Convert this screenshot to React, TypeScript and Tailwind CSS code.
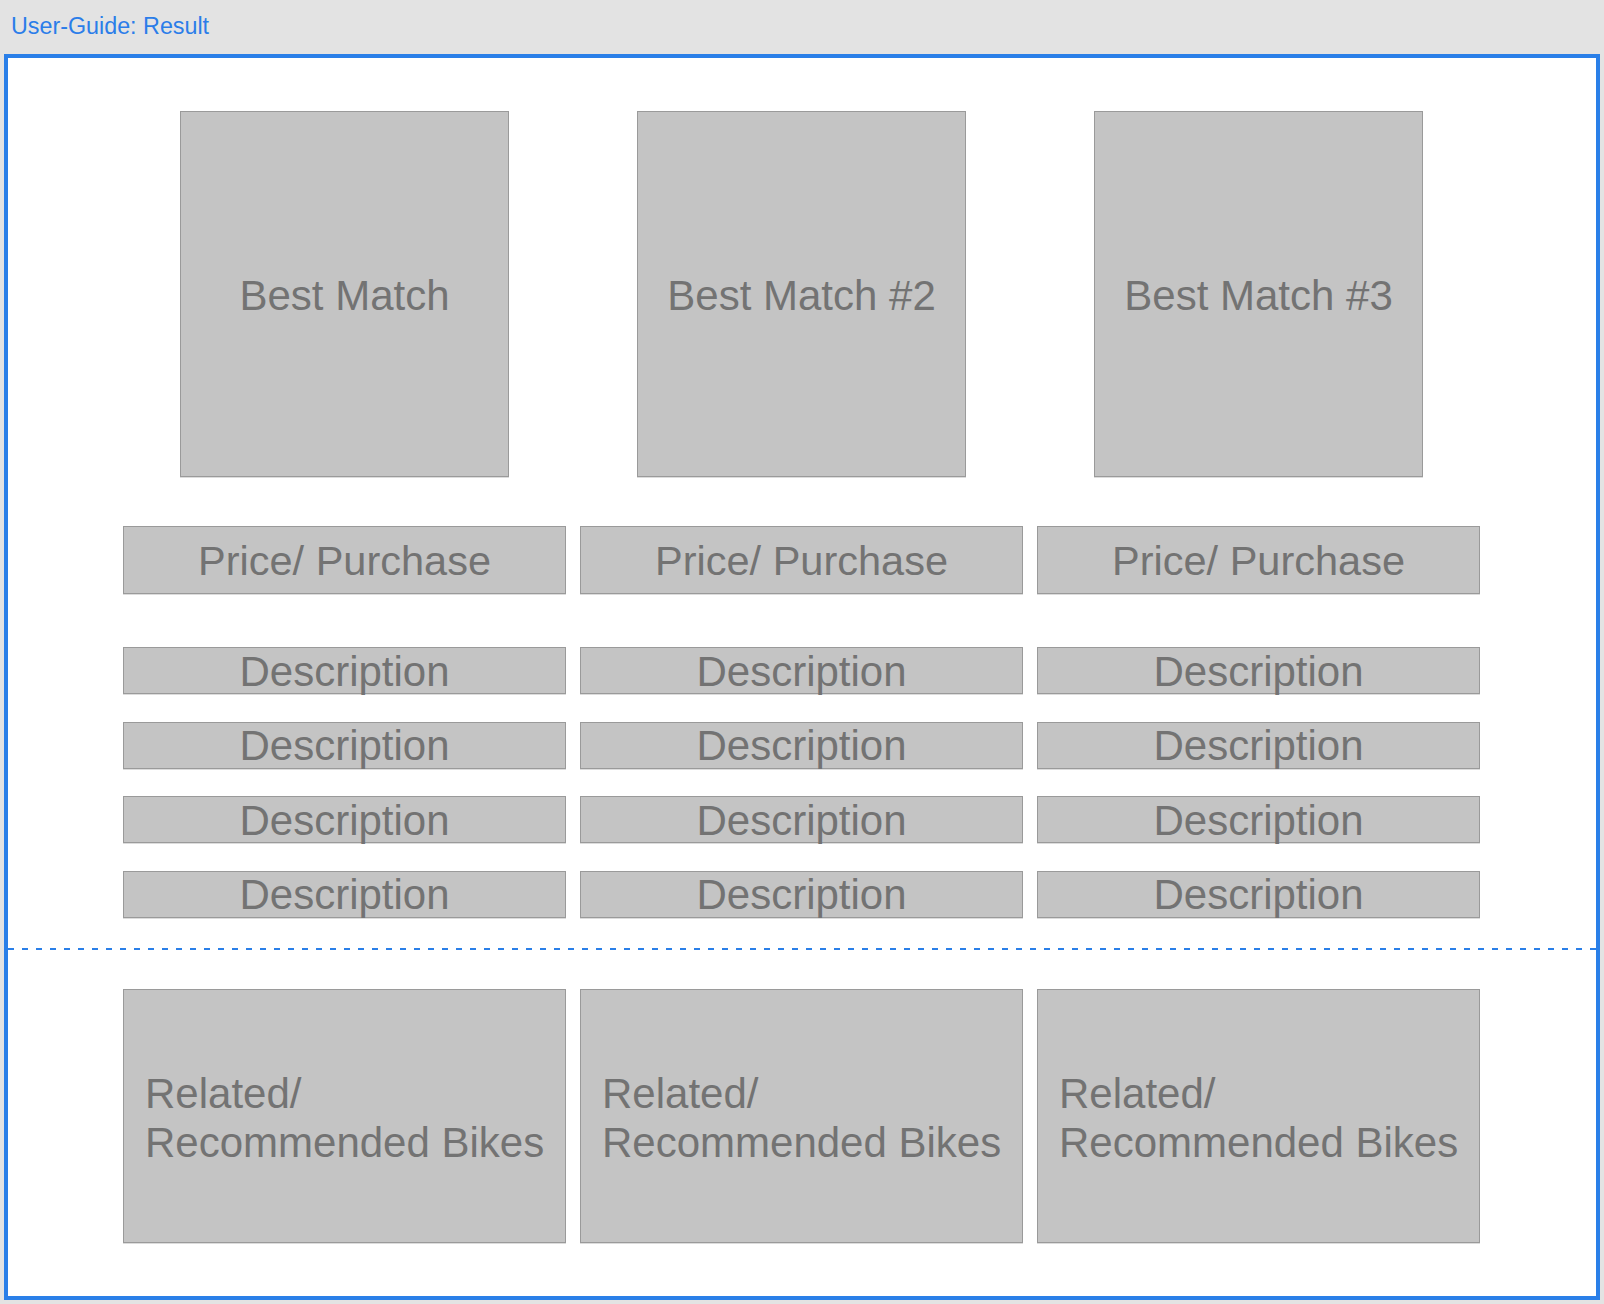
import React from "react";

const font = { fontFamily: '"Liberation Sans", Arial, Helvetica, sans-serif' };

function Box({
  className,
  children,
}: {
  className: string;
  children: React.ReactNode;
}) {
  return (
    <div
      className={
        "box-border border border-[#9a9a9a] bg-[#c4c4c4] text-[#737373] shadow-[0_1px_0_#dcdcdc] " +
        className
      }
    >
      {children}
    </div>
  );
}

function Column({ title }: { title: string }) {
  return (
    <div className="flex flex-col">
      <div className="flex justify-center">
        <Box className="flex h-[366px] w-[329px] items-center justify-center pt-[3px] text-[42px] leading-none">
          {title}
        </Box>
      </div>
      <Box className="mt-[49px] flex h-[68px] w-full items-center justify-center pt-[1px] text-[41.5px] leading-none">
        Price/ Purchase
      </Box>
      <div className="mt-[53px] flex flex-col gap-[27.5px]">
        {[0, 1, 2, 3].map((i) => (
          <Box
            key={i}
            className="flex h-[47px] w-full items-center justify-center pt-[2px] text-[42px] leading-none"
          >
            Description
          </Box>
        ))}
      </div>
    </div>
  );
}

export default function App() {
  const titles = ["Best Match", "Best Match #2", "Best Match #3"];
  return (
    <div
      className="flex h-[1304px] w-[1604px] flex-col bg-[#e3e3e3]"
      style={font}
    >
      <div className="h-[54px] pl-[11px] pt-[13px] text-[23.3px] leading-[26px] text-[#2b7de9]">
        User-Guide: Result
      </div>
      <div className="ml-[4px] box-border flex h-[1246px] w-[1596px] flex-col border-4 border-[#2a7fe8] bg-white">
        <div className="ml-[115px] mt-[53px] grid w-[1357px] grid-cols-3 gap-[14px]">
          {titles.map((t) => (
            <Column key={t} title={t} />
          ))}
        </div>
        <div className="mt-[30.5px] h-[2px] w-full bg-[repeating-linear-gradient(90deg,#2a7fe8_0px,#2a7fe8_6px,transparent_6px,transparent_14px)]" />
        <div className="ml-[115px] mt-[39px] grid w-[1357px] grid-cols-3 gap-[14px]">
          {[0, 1, 2].map((i) => (
            <Box
              key={i}
              className="flex h-[254px] w-full flex-col justify-center pl-[21px] pt-[4px] text-[42px] leading-[49px]"
            >
              <span>Related/</span>
              <span>Recommended Bikes</span>
            </Box>
          ))}
        </div>
      </div>
    </div>
  );
}
